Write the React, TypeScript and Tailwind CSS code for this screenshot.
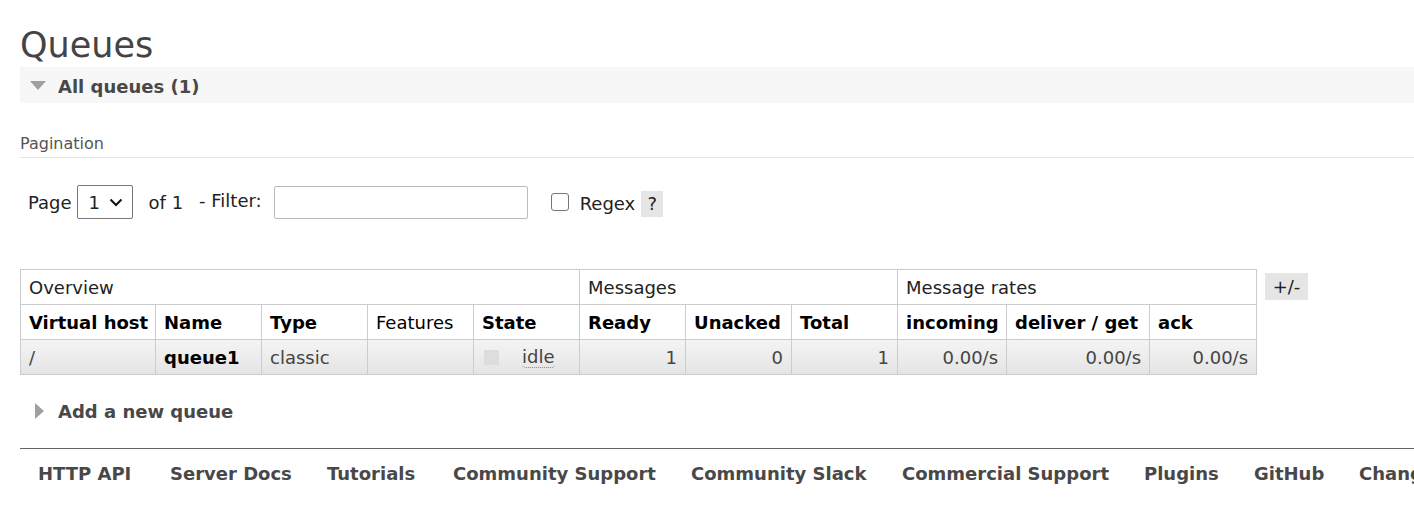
import React from "react";

const font = { fontFamily: '"DejaVu Sans", Verdana, sans-serif' };

export default function App() {
  const th2 = "border border-[#cccccc] px-[8px] h-[35px] text-left font-bold text-[18px] text-black whitespace-nowrap overflow-hidden";
  const td = "border border-[#cccccc] px-[8px] h-[35px] text-[18px] text-[#444] whitespace-nowrap overflow-hidden";
  const th1 = "border border-[#cccccc] px-[8px] h-[35px] text-left font-normal text-[18px] text-[#222]";
  return (
    <div className="bg-white w-[1414px] h-[529px] overflow-hidden text-[#444]" style={font}>
      <div className="pl-[20px] pt-[23px]">
        <h1 className="text-[35px] leading-[44px] font-normal text-[#444]">Queues</h1>
        <div className="bg-[#f7f7f7] h-[36px] flex items-center">
          <svg width="16" height="10" viewBox="0 0 16 10" className="ml-[10px] mr-[12px] mt-[1px]">
            <polygon points="0,0 16,0 8,9" fill="#a0a0a0" />
          </svg>
          <span className="text-[18px] font-bold text-[#484848] mt-[3px]">All queues (1)</span>
        </div>

        <div className="mt-[29px] text-[16px] text-[#555] pb-[1px] border-b border-[#e4e4e4]">Pagination</div>

        <div className="mt-[27px] flex items-center text-[18px] text-[#222]">
          <span className="ml-[8px]">Page</span>
          <div className="ml-[5px] w-[56px] h-[34px] border border-[#777] rounded-[2px] flex items-center pl-[11px] pr-[9px] justify-between">
            <span className="text-[18px]">1</span>
            <svg width="14" height="9" viewBox="0 0 14 9"><path d="M1.5 1.5 L7 7 L12.5 1.5" fill="none" stroke="#111" strokeWidth="2" /></svg>
          </div>
          <span className="ml-[16px]">of 1</span>
          <span className="ml-[16px] -mt-[4px]">- Filter:</span>
          <div className="ml-[12px] w-[254px] h-[33px] border border-[#bbbbbb] rounded-[2px]" />
          <div className="ml-[23px] w-[18px] h-[18px] border border-[#777] rounded-[3px]" />
          <span className="ml-[11px] mt-[3px]">Regex</span>
          <span className="ml-[6px] mt-[3px] bg-[#e5e5e5] w-[22px] h-[26px] flex items-center justify-center">?</span>
        </div>

        <div className="mt-[50px] flex items-start">
          <table className="border-collapse table-fixed w-[1236px]">
            <colgroup>
              <col className="w-[135px]" />
              <col className="w-[106px]" />
              <col className="w-[106px]" />
              <col className="w-[106px]" />
              <col className="w-[106px]" />
              <col className="w-[106px]" />
              <col className="w-[106px]" />
              <col className="w-[106px]" />
              <col className="w-[109px]" />
              <col className="w-[143px]" />
              <col className="w-[107px]" />
            </colgroup>
            <thead>
              <tr>
                <th colSpan={5} className={th1}>Overview</th>
                <th colSpan={3} className={th1}>Messages</th>
                <th colSpan={3} className={th1}>Message rates</th>
              </tr>
              <tr>
                <th className={th2}>Virtual host</th>
                <th className={th2}>Name</th>
                <th className={th2}>Type</th>
                <th className={th2 + " text-[#222]"} style={{ fontWeight: 400 }}>Features</th>
                <th className={th2}>State</th>
                <th className={th2}>Ready</th>
                <th className={th2}>Unacked</th>
                <th className={th2}>Total</th>
                <th className={th2}>incoming</th>
                <th className={th2}>deliver / get</th>
                <th className={th2}>ack</th>
              </tr>
            </thead>
            <tbody>
              <tr className="bg-gradient-to-b from-[#f4f4f4] to-[#e4e4e4]">
                <td className={td}>/</td>
                <td className={td + " font-bold text-black"}>queue1</td>
                <td className={td}>classic</td>
                <td className={td}></td>
                <td className={td}>
                  <div className="flex items-center">
                    <span className="w-[15px] h-[15px] bg-[#dddddd] ml-[2px]" />
                    <span className="ml-[23px] border-b border-dotted border-[#888] leading-[20px] rounded-b-[4px]">idle</span>
                  </div>
                </td>
                <td className={td + " text-right"}>1</td>
                <td className={td + " text-right"}>0</td>
                <td className={td + " text-right"}>1</td>
                <td className={td + " text-right"}>0.00/s</td>
                <td className={td + " text-right"}>0.00/s</td>
                <td className={td + " text-right"}>0.00/s</td>
              </tr>
            </tbody>
          </table>
          <div className="ml-[8px] mt-[4px] bg-[#e5e5e5] w-[43px] h-[27px] flex items-center justify-center text-[18px] text-[#222]">+/-</div>
        </div>

        <div className="mt-[23px] flex items-center h-[26px]">
          <svg width="10" height="16" viewBox="0 0 10 16" className="ml-[15px] mr-[13px]">
            <polygon points="0,0 9,8 0,16" fill="#a0a0a0" />
          </svg>
          <span className="text-[18px] font-bold text-[#484848]">Add a new queue</span>
        </div>

        <div className="mt-[24px] border-t border-[#666] h-0" />
        <div className="flex pt-[11px] pl-[18px] text-[18px] font-bold text-[#484848] whitespace-nowrap">
          <span className="w-[132px] shrink-0">HTTP API</span>
          <span className="w-[157px] shrink-0">Server Docs</span>
          <span className="w-[126px] shrink-0">Tutorials</span>
          <span className="w-[238px] shrink-0">Community Support</span>
          <span className="w-[211px] shrink-0">Community Slack</span>
          <span className="w-[242px] shrink-0">Commercial Support</span>
          <span className="w-[110px] shrink-0">Plugins</span>
          <span className="w-[105px] shrink-0">GitHub</span>
          <span className="shrink-0">Changelog</span>
        </div>
      </div>
    </div>
  );
}
